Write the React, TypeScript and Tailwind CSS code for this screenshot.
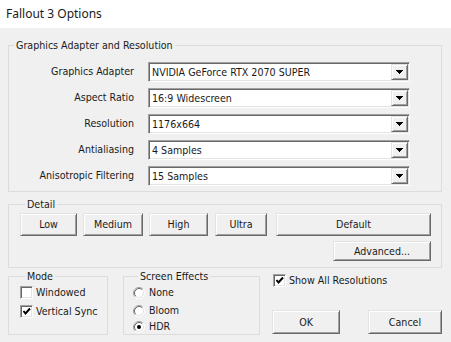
import React from 'react';

const raised =
  'border border-t-[#e3e3e3] border-l-[#e3e3e3] border-r-[#696969] border-b-[#696969] shadow-[inset_1px_1px_#ffffff,inset_-1px_-1px_#a0a0a0]';
const sunken =
  'border border-t-[#a0a0a0] border-l-[#a0a0a0] border-r-white border-b-white shadow-[inset_1px_1px_#696969,inset_-1px_-1px_#e3e3e3]';

const settings = [
  { label: 'Graphics Adapter', value: 'NVIDIA GeForce RTX 2070 SUPER' },
  { label: 'Aspect Ratio', value: '16:9 Widescreen' },
  { label: 'Resolution', value: '1176x664' },
  { label: 'Antialiasing', value: '4 Samples' },
  { label: 'Anisotropic Filtering', value: '15 Samples' },
];

const Arrow = () => (
  <svg width="7" height="4" viewBox="0 0 7 4" shapeRendering="crispEdges">
    <rect x="0" y="0" width="7" height="1" fill="#000" />
    <rect x="1" y="1" width="5" height="1" fill="#000" />
    <rect x="2" y="2" width="3" height="1" fill="#000" />
    <rect x="3" y="3" width="1" height="1" fill="#000" />
  </svg>
);

const Combo = ({ value }: { value: string }) => (
  <div className={`h-[20px] w-[262px] bg-white p-[1px] ${sunken}`}>
    <div className="flex h-full">
      <span className="flex-1 pl-[2px] leading-[16px]">{value}</span>
      <span className={`flex h-[16px] w-[17px] items-center justify-center bg-[#f0f0f0] ${raised}`}>
        <Arrow />
      </span>
    </div>
  </div>
);

const Button = ({ children, className }: { children: React.ReactNode; className: string }) => (
  <button className={`bg-[#f0f0f0] text-center leading-none ${raised} ${className}`}>{children}</button>
);

const Checkbox = ({ label, checked }: { label: string; checked?: boolean }) => (
  <div className="flex h-[13px] items-center gap-[3px]">
    <span className={`flex h-[13px] w-[13px] items-center justify-center bg-white ${sunken}`}>
      {checked && (
        <svg width="9" height="9" viewBox="0 0 9 9">
          <polyline points="1.5,4 3.5,6.5 8,1.5" fill="none" stroke="#000" strokeWidth="2" />
        </svg>
      )}
    </span>
    <span>{label}</span>
  </div>
);

const Radio = ({ label, checked, className }: { label: string; checked?: boolean; className: string }) => (
  <div className={`flex h-[12px] items-center gap-[4px] ${className}`}>
    <svg width="12" height="12" viewBox="0 0 12 12">
      <circle cx="6" cy="6" r="5" fill="#fff" />
      <path d="M2.11 9.89 A5.5 5.5 0 0 1 9.89 2.11" fill="none" stroke="#a0a0a0" />
      <path d="M9.89 2.11 A5.5 5.5 0 0 1 2.11 9.89" fill="none" stroke="#ffffff" />
      <path d="M2.82 9.18 A4.5 4.5 0 0 1 9.18 2.82" fill="none" stroke="#696969" />
      <path d="M9.18 2.82 A4.5 4.5 0 0 1 2.82 9.18" fill="none" stroke="#e3e3e3" />
      {checked && <circle cx="6" cy="6" r="2" fill="#000" />}
    </svg>
    <span>{label}</span>
  </div>
);

const Legend = ({ children }: { children: React.ReactNode }) => (
  <legend className="ml-[5px] px-[2px] leading-[13px]">{children}</legend>
);

export default function App() {
  return (
    <div className="h-[342px] w-[451px] overflow-hidden bg-[#f0f0f0] font-['DejaVu_Sans_Condensed','Liberation_Sans',Arial,sans-serif] text-[10.6px] text-[#1a1a1a]">
      <div className="flex h-[28px] items-center bg-white pl-[6px] font-['Noto_Sans',sans-serif] text-[12px]">
        Fallout 3 Options
      </div>

      <div className="pl-[8px] pr-[9px] pt-[11px]">
        {/* Graphics Adapter and Resolution */}
        <fieldset className="border border-[#dcdcdc] pb-[5px] pt-[10px]">
          <Legend>Graphics Adapter and Resolution</Legend>
          <div className="flex flex-col gap-[6px]">
            {settings.map((s) => (
              <div key={s.label} className="flex items-center gap-[14px]">
                <span className="w-[125px] text-right">{s.label}</span>
                <Combo value={s.value} />
              </div>
            ))}
          </div>
        </fieldset>

        {/* Detail */}
        <fieldset className="mt-[6px] border border-[#dcdcdc] pb-[6px] pl-[11px] pr-[10px] pt-[2px]">
          <Legend>Detail</Legend>
          <div className="flex h-[23px]">
            <Button className="w-[57px]">Low</Button>
            <Button className="ml-[6px] w-[60px]">Medium</Button>
            <Button className="ml-[6px] w-[59px]">High</Button>
            <Button className="ml-[7px] w-[52px]">Ultra</Button>
            <Button className="ml-[9px] w-[155px]">Default</Button>
          </div>
          <div className="mt-[5px] flex justify-end">
            <Button className="h-[20px] w-[98px]">Advanced...</Button>
          </div>
        </fieldset>

        <div className="mt-[2px] flex h-[65px]">
          <fieldset className="h-[65px] w-[100px] border border-[#dcdcdc] pl-[11px] pt-[3px]">
            <Legend>Mode</Legend>
            <div className="flex flex-col gap-[6px]">
              <Checkbox label="Windowed" />
              <Checkbox label="Vertical Sync" checked />
            </div>
          </fieldset>

          <fieldset className="ml-[15px] h-[65px] w-[137px] border border-[#dcdcdc] pl-[9px]">
            <Legend>Screen Effects</Legend>
            <div className="flex flex-col">
              <Radio label="None" className="mt-[4px]" />
              <Radio label="Bloom" className="mt-[6px]" />
              <Radio label="HDR" className="mt-[4px]" checked />
            </div>
          </fieldset>

          <div className="flex flex-1 flex-col pt-[4px]">
            <div className="ml-[13px]">
              <Checkbox label="Show All Resolutions" checked />
            </div>
            <div className="ml-[12px] mt-[23px] flex h-[24px] justify-between">
              <Button className="w-[68px]">OK</Button>
              <Button className="w-[74px]">Cancel</Button>
            </div>
          </div>
        </div>
      </div>
    </div>
  );
}
